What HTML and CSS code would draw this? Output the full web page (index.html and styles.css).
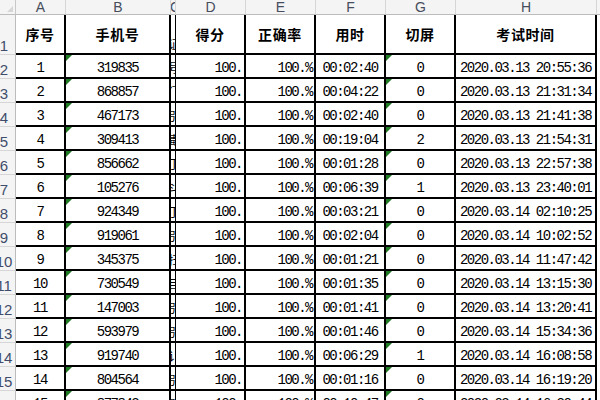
FILE: index.html
```html
<!DOCTYPE html>
<html lang="zh-CN">
<head>
<meta charset="utf-8">
<title>考试成绩</title>
<link rel="stylesheet" href="styles.css">
</head>
<body>
<div class="sheet">
  <div class="corner"><span class="corner-tri"></span></div>
  <div class="ch">A</div>
  <div class="ch">B</div>
  <div class="ch ch-narrow"><span>C</span></div>
  <div class="ch">D</div>
  <div class="ch">E</div>
  <div class="ch">F</div>
  <div class="ch">G</div>
  <div class="ch">H</div>
  <div class="ch tail-h"></div>

  <div class="rh"><span>1</span></div>
  <div class="c head">序号</div>
  <div class="c head">手机号</div>
  <div class="c narrow"><span>证</span></div>
  <div class="c head">得分</div>
  <div class="c head">正确率</div>
  <div class="c head">用时</div>
  <div class="c head">切屏</div>
  <div class="c head">考试时间</div>
  <div class="tail"></div>

  <div class="rh"><span>2</span></div>
  <div class="c ctr">1</div>
  <div class="c ctr flag">319835</div>
  <div class="c narrow"><span>号</span></div>
  <div class="c num">100.</div>
  <div class="c num">100.%</div>
  <div class="c ctr">00:02:40</div>
  <div class="c ctr flag">0</div>
  <div class="c ctr">2020.03.13 20:55:36</div>
  <div class="tail"></div>

  <div class="rh"><span>3</span></div>
  <div class="c ctr">2</div>
  <div class="c ctr flag">868857</div>
  <div class="c narrow"><span>门</span></div>
  <div class="c num">100.</div>
  <div class="c num">100.%</div>
  <div class="c ctr">00:04:22</div>
  <div class="c ctr flag">0</div>
  <div class="c ctr">2020.03.13 21:31:34</div>
  <div class="tail"></div>

  <div class="rh"><span>4</span></div>
  <div class="c ctr">3</div>
  <div class="c ctr flag">467173</div>
  <div class="c narrow"><span>引</span></div>
  <div class="c num">100.</div>
  <div class="c num">100.%</div>
  <div class="c ctr">00:02:40</div>
  <div class="c ctr flag">0</div>
  <div class="c ctr">2020.03.13 21:41:38</div>
  <div class="tail"></div>

  <div class="rh"><span>5</span></div>
  <div class="c ctr">4</div>
  <div class="c ctr flag">309413</div>
  <div class="c narrow"><span>毒</span></div>
  <div class="c num">100.</div>
  <div class="c num">100.%</div>
  <div class="c ctr">00:19:04</div>
  <div class="c ctr flag">2</div>
  <div class="c ctr">2020.03.13 21:54:31</div>
  <div class="tail"></div>

  <div class="rh"><span>6</span></div>
  <div class="c ctr">5</div>
  <div class="c ctr flag">856662</div>
  <div class="c narrow"><span>丁</span></div>
  <div class="c num">100.</div>
  <div class="c num">100.%</div>
  <div class="c ctr">00:01:28</div>
  <div class="c ctr flag">0</div>
  <div class="c ctr">2020.03.13 22:57:38</div>
  <div class="tail"></div>

  <div class="rh"><span>7</span></div>
  <div class="c ctr">6</div>
  <div class="c ctr flag">105276</div>
  <div class="c narrow"><span>斗</span></div>
  <div class="c num">100.</div>
  <div class="c num">100.%</div>
  <div class="c ctr">00:06:39</div>
  <div class="c ctr flag">1</div>
  <div class="c ctr">2020.03.13 23:40:01</div>
  <div class="tail"></div>

  <div class="rh"><span>8</span></div>
  <div class="c ctr">7</div>
  <div class="c ctr flag">924349</div>
  <div class="c narrow"><span>丁</span></div>
  <div class="c num">100.</div>
  <div class="c num">100.%</div>
  <div class="c ctr">00:03:21</div>
  <div class="c ctr flag">0</div>
  <div class="c ctr">2020.03.14 02:10:25</div>
  <div class="tail"></div>

  <div class="rh"><span>9</span></div>
  <div class="c ctr">8</div>
  <div class="c ctr flag">919061</div>
  <div class="c narrow"><span>引</span></div>
  <div class="c num">100.</div>
  <div class="c num">100.%</div>
  <div class="c ctr">00:02:04</div>
  <div class="c ctr flag">0</div>
  <div class="c ctr">2020.03.14 10:02:52</div>
  <div class="tail"></div>

  <div class="rh"><span>10</span></div>
  <div class="c ctr">9</div>
  <div class="c ctr flag">345375</div>
  <div class="c narrow"><span>扫</span></div>
  <div class="c num">100.</div>
  <div class="c num">100.%</div>
  <div class="c ctr">00:01:21</div>
  <div class="c ctr flag">0</div>
  <div class="c ctr">2020.03.14 11:47:42</div>
  <div class="tail"></div>

  <div class="rh"><span>11</span></div>
  <div class="c ctr">10</div>
  <div class="c ctr flag">730549</div>
  <div class="c narrow"><span>目</span></div>
  <div class="c num">100.</div>
  <div class="c num">100.%</div>
  <div class="c ctr">00:01:35</div>
  <div class="c ctr flag">0</div>
  <div class="c ctr">2020.03.14 13:15:30</div>
  <div class="tail"></div>

  <div class="rh"><span>12</span></div>
  <div class="c ctr">11</div>
  <div class="c ctr flag">147003</div>
  <div class="c narrow"><span>引</span></div>
  <div class="c num">100.</div>
  <div class="c num">100.%</div>
  <div class="c ctr">00:01:41</div>
  <div class="c ctr flag">0</div>
  <div class="c ctr">2020.03.14 13:20:41</div>
  <div class="tail"></div>

  <div class="rh"><span>13</span></div>
  <div class="c ctr">12</div>
  <div class="c ctr flag">593979</div>
  <div class="c narrow"><span>引</span></div>
  <div class="c num">100.</div>
  <div class="c num">100.%</div>
  <div class="c ctr">00:01:46</div>
  <div class="c ctr flag">0</div>
  <div class="c ctr">2020.03.14 15:34:36</div>
  <div class="tail"></div>

  <div class="rh"><span>14</span></div>
  <div class="c ctr">13</div>
  <div class="c ctr flag">919740</div>
  <div class="c narrow"><span>讠</span></div>
  <div class="c num">100.</div>
  <div class="c num">100.%</div>
  <div class="c ctr">00:06:29</div>
  <div class="c ctr flag">1</div>
  <div class="c ctr">2020.03.14 16:08:58</div>
  <div class="tail"></div>

  <div class="rh"><span>15</span></div>
  <div class="c ctr">14</div>
  <div class="c ctr flag">804564</div>
  <div class="c narrow"><span>引</span></div>
  <div class="c num">100.</div>
  <div class="c num">100.%</div>
  <div class="c ctr">00:01:16</div>
  <div class="c ctr flag">0</div>
  <div class="c ctr">2020.03.14 16:19:20</div>
  <div class="tail"></div>

  <div class="rh"><span>16</span></div>
  <div class="c ctr">15</div>
  <div class="c ctr flag">877842</div>
  <div class="c narrow"><span>引</span></div>
  <div class="c num">100.</div>
  <div class="c num">100.%</div>
  <div class="c ctr">00:10:47</div>
  <div class="c ctr flag">0</div>
  <div class="c ctr">2020.03.14 16:30:44</div>
  <div class="tail"></div>
</div>
</body>
</html>
```

FILE: styles.css
```css
* { box-sizing: border-box; }

html, body {
  margin: 0;
  padding: 0;
  background: #ffffff;
  overflow: hidden;
  width: 600px;
  height: 400px;
}

.sheet {
  display: grid;
  grid-template-columns: 16px 50px 105px 5px 70px 70px 70px 70px 141px 3px;
  grid-template-rows: 15px 40px repeat(15, 24px);
  width: 600px;
  background: #ffffff;
}

/* column header row */
.corner {
  position: relative;
  background: #f4f4f4;
  border-right: 1px solid #c8c8c8;
  border-bottom: 1px solid #bcbcbc;
}
.corner-tri {
  position: absolute;
  right: 2px;
  bottom: 2px;
  width: 0;
  height: 0;
  border-left: 6px solid transparent;
  border-bottom: 6px solid #d6d6d6;
}

.ch {
  display: flex;
  align-items: center;
  justify-content: center;
  background: #f4f4f4;
  border-right: 1px solid #d6d6d6;
  border-bottom: 1px solid #bcbcbc;
  font-family: "Liberation Sans", Arial, sans-serif;
  font-size: 14px;
  line-height: 14px;
  color: #474d5c;
  overflow: hidden;
}
.ch-narrow {
  border-right: 1px solid #d6d6d6;
  justify-content: flex-start;
}
.ch-narrow span { margin-left: -1px; }
.tail-h { border-right: none; }

/* row headers */
.rh {
  display: flex;
  align-items: flex-end;
  background: #f4f4f4;
  border-right: 1px solid #bcbcbc;
  border-bottom: 1px solid #d6d6d6;
  overflow: hidden;
  padding-bottom: 1px;
}
.rh span {
  display: flex;
  justify-content: center;
  width: 8px;
  flex: none;
  font-family: "Liberation Sans", Arial, sans-serif;
  font-size: 15px;
  line-height: 15px;
  color: #3f4d6b;
  white-space: nowrap;
}

/* cells */
.c {
  position: relative;
  display: flex;
  border-right: 2px solid #000;
  border-bottom: 2px solid #000;
  font-family: "Liberation Mono", "Courier New", monospace;
  font-size: 14px;
  letter-spacing: -1.5px;
  color: #000;
  white-space: nowrap;
  line-height: 14px;
  align-items: flex-end;
  padding-bottom: 2px;
}

.head {
  align-items: center;
  justify-content: center;
  padding-bottom: 0;
  font-family: "Noto Sans CJK SC", "Noto Sans", sans-serif;
  font-weight: 700;
  font-size: 14px;
  letter-spacing: 0.6px;
}

.ctr { justify-content: center; }
.num { justify-content: flex-end; padding-right: 2px; }

.narrow {
  border-right: 1px solid #000;
  overflow: hidden;
  justify-content: flex-end;
  padding-bottom: 2px;
}
.narrow span {
  flex: none;
  font-family: "Noto Sans CJK SC", sans-serif;
  font-size: 12px;
  letter-spacing: 0;
  margin-right: -5px;
}

.flag::before {
  content: "";
  position: absolute;
  left: 0;
  top: 0;
  width: 0;
  height: 0;
  border-top: 6px solid #1f7a23;
  border-right: 6px solid transparent;
}

.tail { background: #ffffff; }
```
